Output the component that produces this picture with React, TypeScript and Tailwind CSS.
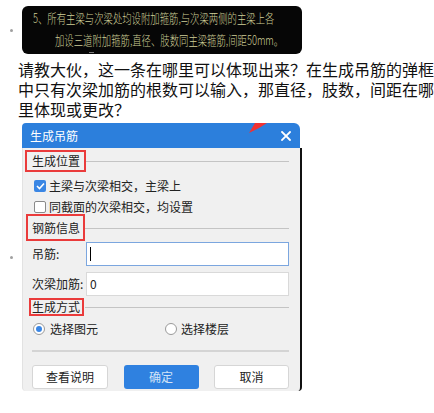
import React from "react";

const cjk = { fontFamily: '"Noto Sans CJK SC", "Noto Sans", sans-serif' };

function Heading({ label, boxTop, boxH, boxLeft, boxW }: { label: string; boxTop: number; boxH: number; boxLeft: number; boxW: number }) {
  return (
    <div className="relative flex h-[22px] items-center">
      <span className="text-[12px] leading-none text-[#222]">{label}</span>
      <div className="ml-[5px] h-px flex-1 bg-[#c4c4c4]" />
      <span
        className="pointer-events-none absolute border-2 border-[#ea3b3b]"
        style={{ top: boxTop, height: boxH, left: boxLeft, width: boxW }}
      />
    </div>
  );
}

export default function App() {
  return (
    <div className="h-[413px] w-[434px] overflow-hidden bg-white pt-[6px]" style={cjk}>
      {/* row 1: image */}
      <div className="flex items-center">
        <div className="flex w-[22px] justify-center">
          <div className="h-[3px] w-[3px] rounded-full bg-[#a0a0a0]" />
        </div>
        <div className="relative h-[48px] w-[280px] overflow-hidden rounded-[6px] bg-[#060606] text-[#cfcf98]">
          <div className="absolute left-[11px] top-[3px] whitespace-nowrap text-[13px] leading-[17px] origin-left scale-x-[0.72] font-light">
            5、所有主梁与次梁处均设附加箍筋,与次梁两侧的主梁上各
          </div>
          <div className="absolute left-[33px] top-[25px] whitespace-nowrap text-[13px] leading-[17px] origin-left scale-x-[0.72] font-light">
            加设三道附加箍筋,直径、肢数同主梁箍筋,间距50mm。
          </div>
          <div className="absolute left-[67px] top-[46px] h-[1px] w-[5px] bg-[#777]" />
        </div>
      </div>

      {/* question text */}
      <div className="mt-[5px] pl-[18px] text-[16px] leading-[20px] text-[#111]">
        <div className="whitespace-nowrap">请教大伙，这一条在哪里可以体现出来？在生成吊筋的弹框</div>
        <div className="whitespace-nowrap">中只有次梁加筋的根数可以输入，那直径，肢数，间距在哪</div>
        <div className="whitespace-nowrap">里体现或更改？</div>
      </div>

      {/* row 2: dialog */}
      <div className="mt-[4px] flex items-center">
        <div className="flex w-[22px] justify-center">
          <div className="h-[3px] w-[3px] rounded-full bg-[#a0a0a0]" />
        </div>
        <div className="w-[280px]">
          <div className="relative flex h-[25px] w-[278px] items-center justify-between rounded-tl-[4px] rounded-tr-[6px] bg-[#2c7fdc] pl-[8px] pr-[9px]">
            <span className="text-[12px] leading-none text-white">生成吊筋</span>
            <svg width="10" height="10" viewBox="0 0 10 10">
              <path d="M1 1 L9 9 M9 1 L1 9" stroke="white" strokeWidth="1.8" strokeLinecap="square" />
            </svg>
            <svg className="absolute left-[226px] top-0" width="20" height="11" viewBox="0 0 20 11">
              <polygon points="1,10 7,0 19,0 11,5" fill="#f03232" />
            </svg>
          </div>
          <div className="rounded-b-[4px] border-l border-r-2 border-l-[#e2e2e2] border-r-[#111] bg-[#f0f0f0] pb-[2px] pl-[9px] pr-[11px] pt-[2px] text-[12px] text-[#222]">
            <Heading label="生成位置" boxTop={0} boxH={22} boxLeft={-7} boxW={61} />

            <div className="mt-[3px] flex h-[21px] items-center pl-[2px]">
              <span className="flex h-[12px] w-[12px] items-center justify-center rounded-[2px] bg-[#3a86e4]">
                <svg width="9" height="8" viewBox="0 0 9 8">
                  <path d="M1 4 L3.5 6.5 L8 1.5" stroke="white" strokeWidth="1.6" fill="none" />
                </svg>
              </span>
              <span className="ml-[3px] leading-none">主梁与次梁相交，主梁上</span>
            </div>
            <div className="flex h-[21px] items-center pl-[2px]">
              <span className="h-[12px] w-[12px] rounded-[2px] border border-[#8a8a8a] bg-white" />
              <span className="ml-[3px] leading-none">同截面的次梁相交，均设置</span>
            </div>

            <Heading label="钢筋信息" boxTop={-3} boxH={27} boxLeft={-6} boxW={59} />

            <div className="mt-[3px] flex h-[24px] items-center">
              <span className="w-[54px] leading-none">吊筋:</span>
              <div className="flex h-[24px] flex-1 items-center border border-[#7ba6df] bg-white pl-[3px]">
                <div className="h-[14px] w-px bg-black" />
              </div>
            </div>
            <div className="mt-[6px] flex h-[24px] items-center">
              <span className="w-[54px] whitespace-nowrap leading-none">次梁加筋:</span>
              <div className="flex h-[24px] flex-1 items-center border border-[#d9d9d9] bg-white pl-[3px] leading-none">
                0
              </div>
            </div>

            <Heading label="生成方式" boxTop={2} boxH={18} boxLeft={-3} boxW={55} />

            <div className="mt-[1px] flex h-[20px] items-center">
              <div className="flex w-[133px] items-center pl-[1px]">
                <span className="flex h-[12px] w-[12px] items-center justify-center rounded-full border border-[#9a9a9a] bg-white">
                  <span className="h-[6px] w-[6px] rounded-full bg-[#3a86e4]" />
                </span>
                <span className="ml-[5px] leading-none">选择图元</span>
              </div>
              <div className="flex items-center">
                <span className="h-[12px] w-[12px] rounded-full border border-[#9a9a9a] bg-white" />
                <span className="ml-[4px] leading-none">选择楼层</span>
              </div>
            </div>

            <div className="mt-[11px] h-[2px] bg-[#d4d4d4]" />

            <div className="mt-[13px] flex h-[24px] justify-between">
              <button className="flex h-[24px] w-[76px] items-center justify-center rounded-[3px] border border-[#d6d6d6] bg-white text-[12px] leading-none text-[#222]">
                查看说明
              </button>
              <button className="flex h-[24px] w-[75px] items-center justify-center rounded-[3px] bg-[#2f81e0] text-[12px] leading-none text-[#d2e3f7]">
                确定
              </button>
              <button className="flex h-[24px] w-[75px] items-center justify-center rounded-[3px] border border-[#d6d6d6] bg-white text-[12px] leading-none text-[#222]">
                取消
              </button>
            </div>
          </div>
        </div>
      </div>
    </div>
  );
}
